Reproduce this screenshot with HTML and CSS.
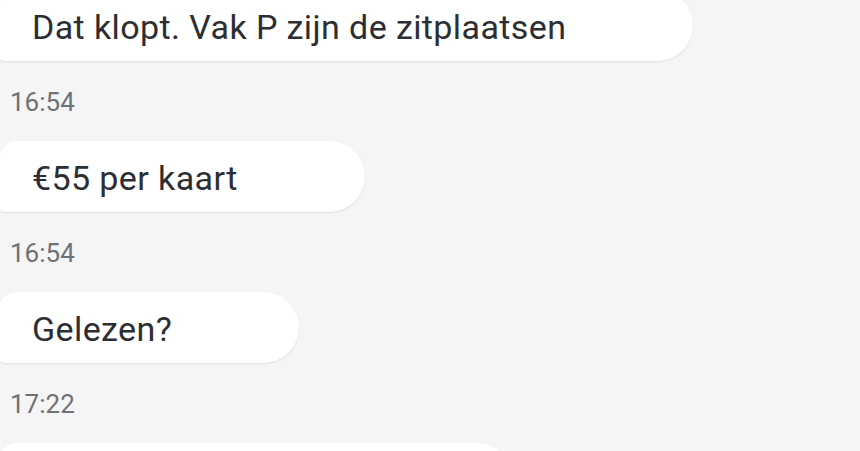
FILE: index.html
```html
<!DOCTYPE html>
<html>
<head>
<meta charset="utf-8">
<link rel="stylesheet" href="styles.css">
</head>
<body>
<div class="chat">
  <div class="msg first">
    <div class="bubble">Dat klopt. Vak P zijn de zitplaatsen</div>
    <div class="time">16:54</div>
  </div>
  <div class="msg">
    <div class="bubble">€55 per kaart</div>
    <div class="time">16:54</div>
  </div>
  <div class="msg">
    <div class="bubble">Gelezen?</div>
    <div class="time">17:22</div>
  </div>
  <div class="msg">
    <div class="bubble wide">&nbsp;</div>
  </div>
</div>
</body>
</html>
```
FILE: styles.css
```css
html, body {
  margin: 0;
  padding: 0;
  background: #f5f5f5;
  overflow: hidden;
}
.chat {
  display: flex;
  flex-direction: column;
  align-items: flex-start;
  font-family: Roboto, "Noto Sans", sans-serif;
}
.msg {
  display: flex;
  flex-direction: column;
  align-items: flex-start;
}
.msg.first {
  margin-top: -10px;
}
.bubble {
  box-sizing: border-box;
  height: 71px;
  margin-left: -1px;
  padding: 17px 127px 0 33px;
  background: #ffffff;
  border-radius: 18px 36px 36px 6px;
  box-shadow: 0 1px 2px rgba(0, 0, 0, 0.09);
  font-size: 34px;
  line-height: 40px;
  letter-spacing: 0.4px;
  color: #2c2e33;
  white-space: nowrap;
}
.bubble.wide {
  width: 514px;
}
.time {
  box-sizing: border-box;
  height: 80px;
  padding-top: 2px;
  line-height: 78px;
  padding-left: 10px;
  font-size: 26px;
  color: #6f7175;
}
```
